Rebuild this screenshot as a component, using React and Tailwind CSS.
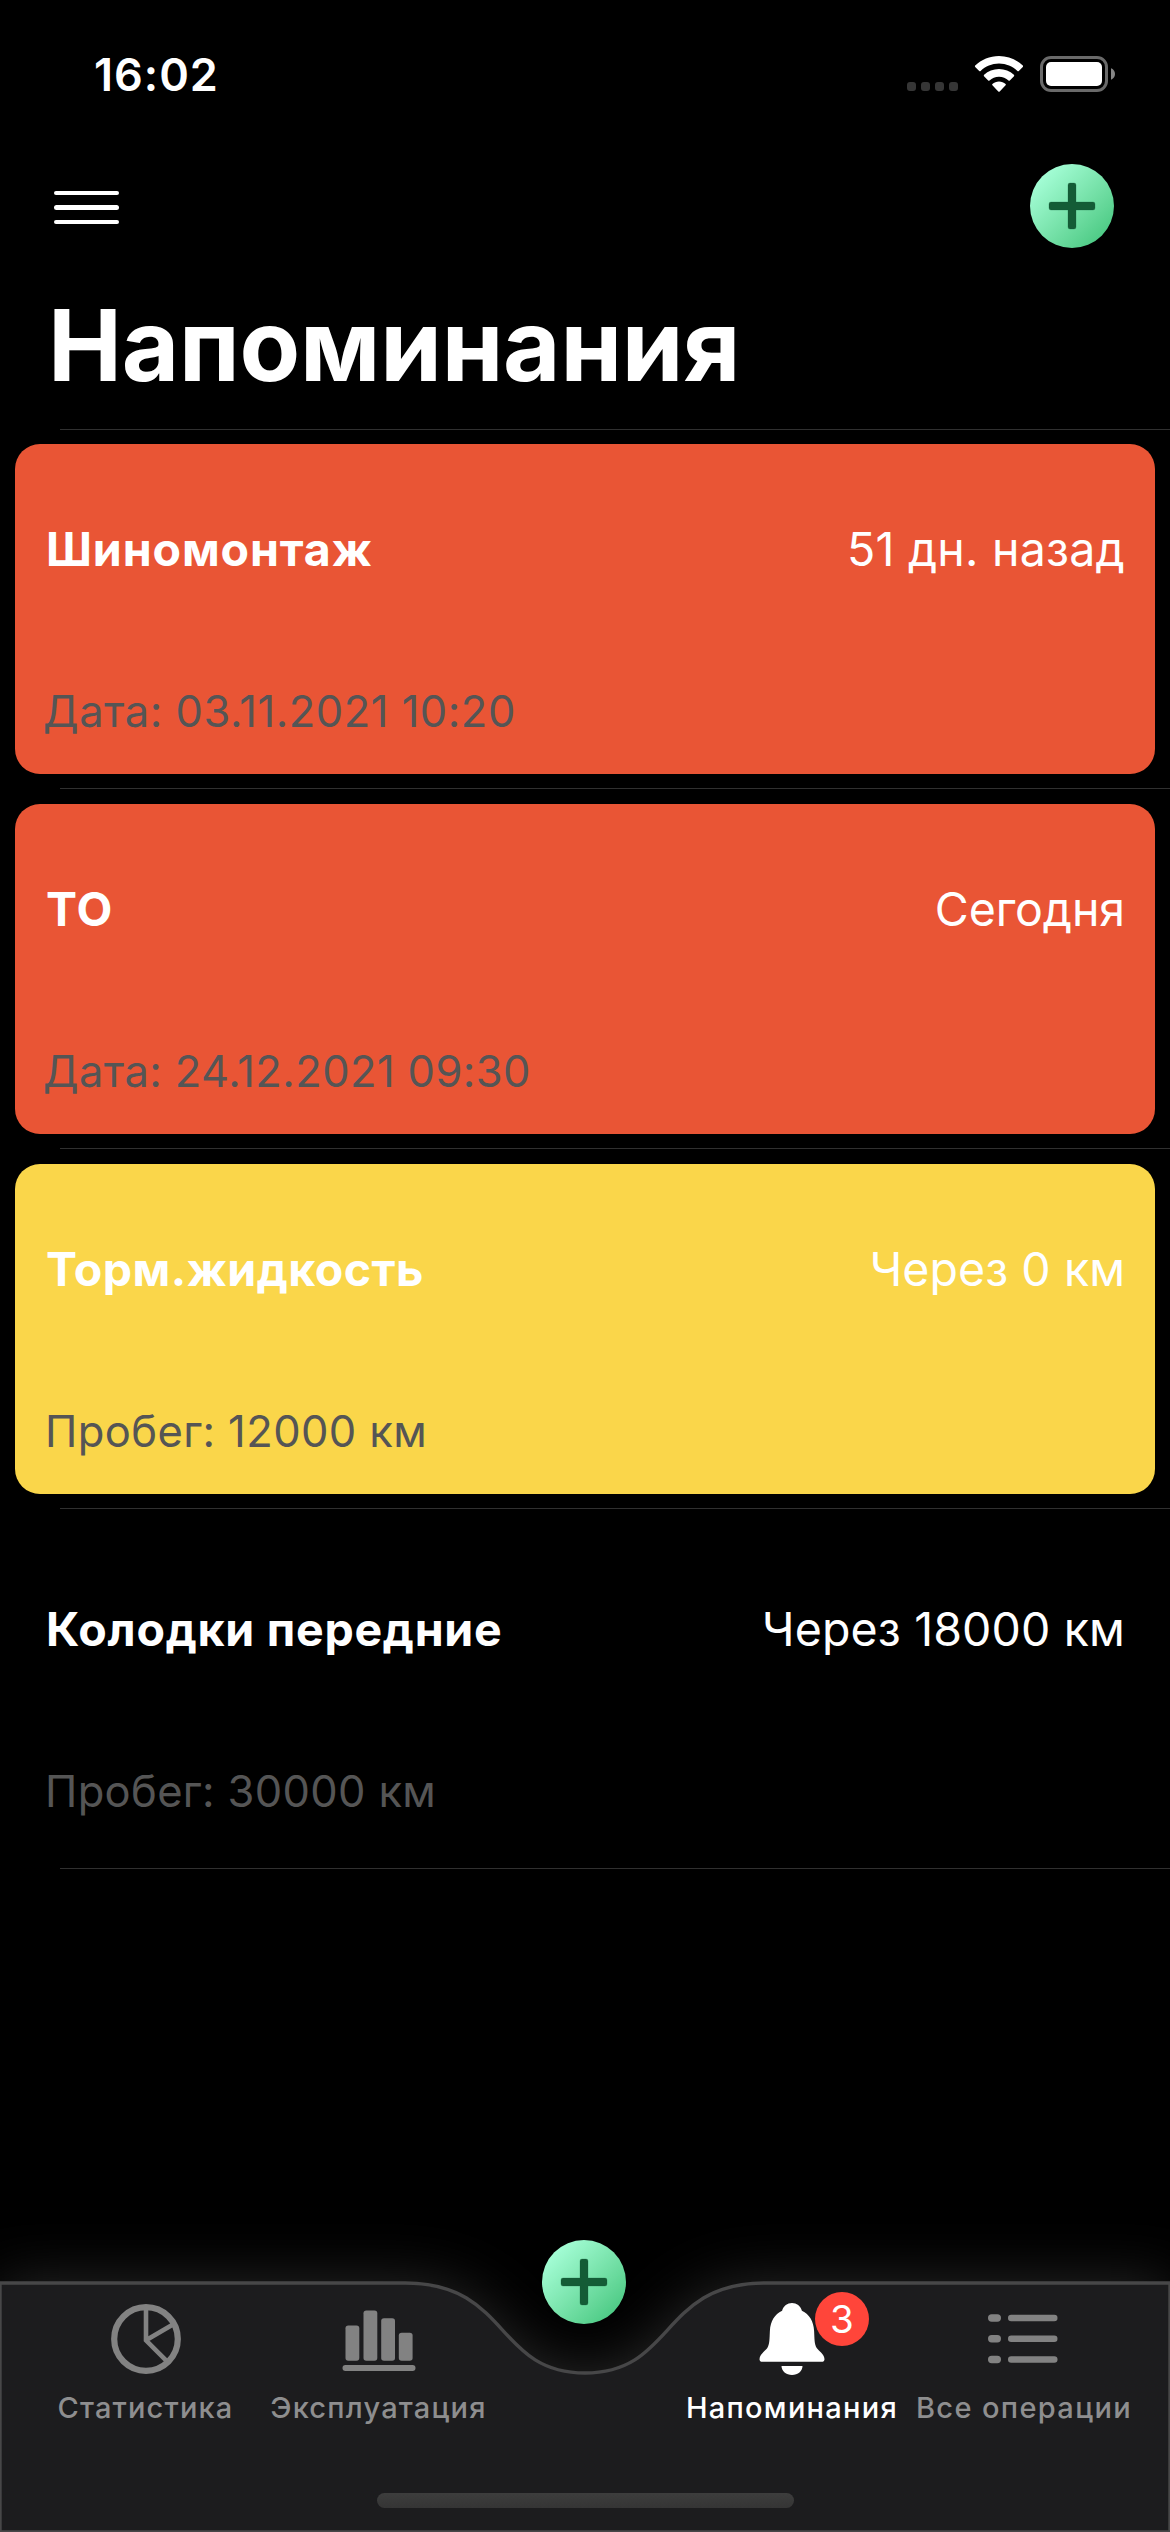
const reminders = [
  {
    title: "Шиномонтаж", due: "51 дн. назад", info: "Дата: 03.11.2021 10:20",
    card: "bg-[#e95535]", titleTrack: "tracking-[0.88px]", dueTrack: "tracking-[0.22px]", infoTrack: "-ml-[3px] tracking-[0.510px]",
  },
  {
    title: "ТО", due: "Сегодня", info: "Дата: 24.12.2021 09:30",
    card: "bg-[#e95535]", titleTrack: "tracking-[0.88px]", dueTrack: "-tracking-[0.100px]", infoTrack: "-ml-[3px] tracking-[0.390px]",
  },
  {
    title: "Торм.жидкость", due: "Через 0 км", info: "Пробег: 12000 км",
    card: "bg-[#fad64a]", titleTrack: "tracking-[0.44px]", dueTrack: "tracking-[0.050px]", infoTrack: "-ml-px tracking-[0.400px]",
  },
  {
    title: "Колодки передние", due: "Через 18000 км", info: "Пробег: 30000 км",
    card: "bg-black", titleTrack: "tracking-[0.73px]", dueTrack: "tracking-[0.130px]", infoTrack: "-ml-px tracking-[0.330px]",
  },
];

function SignalDots() {
  return (
    <div className="mt-[25px] flex gap-[5px]">
      {[0, 1, 2, 3].map((i) => (
        <span key={i} className="size-[9px] rounded-[3px] bg-[#363636]" />
      ))}
    </div>
  );
}

function WifiIcon() {
  return (
    <svg width="50" height="38" viewBox="0 0 50 38" fill="#fff">
      <path d="M25 1C34.2 1 42.6 4.6 48.8 10.5c.4.4.4 1 0 1.4l-4 4.1c-.4.4-1 .4-1.4 0C38.6 11.400 32.100 8.600 25 8.600S11.400 11.400 6.600 16c-.4.4-1 .4-1.400 0l-4-4.100c-.4-.4-.4-1 0-1.400C7.400 4.600 15.800 1 25 1z" />
      <path d="M25 14c5.700 0 10.900 2.200 14.900 5.800.4.4.5 1 .1 1.400l-4.200 4.200c-.3.4-.9.400-1.300.1-2.500-2.300-5.800-3.700-9.500-3.700s-7 1.400-9.500 3.700c-.4.300-1 .3-1.300-.1L10 21.200c-.4-.4-.3-1 .1-1.400C14.100 16.200 19.300 14 25 14z" />
      <path d="M25 26.500c2.500 0 4.800.9 6.600 2.400.4.300.4.9 0 1.300l-5.900 6.200c-.4.400-1 .4-1.400 0l-5.900-6.200c-.4-.4-.4-1 0-1.300 1.800-1.500 4.100-2.400 6.600-2.400z" />
    </svg>
  );
}

function BatteryIcon() {
  return (
    <svg width="75" height="36" viewBox="0 0 75 36">
      <rect x="1.500" y="1.500" width="65" height="33" rx="9.500" fill="none" stroke="#6a6a6a" strokeWidth="3" />
      <rect x="6" y="6" width="56" height="24" rx="5" fill="#fff" />
      <path d="M71 12.300c2.400.8 4 3 4 5.700s-1.600 4.900-4 5.700z" fill="#858585" />
    </svg>
  );
}

function AddButton() {
  return (
    <button
      type="button"
      className="flex size-[84px] items-center justify-center rounded-full bg-linear-to-br from-[#a6ffd8] from-12% to-[#4bca84] to-88%"
    >
      <svg width="54" height="54" viewBox="0 0 54 54">
        <g fill="#145c36" stroke="#145c36" strokeOpacity="0.25" strokeWidth="1">
          <path d="M25 4h4a2 2 0 0 1 2 2v17h17a2 2 0 0 1 2 2v4a2 2 0 0 1-2 2H31v17a2 2 0 0 1-2 2h-4a2 2 0 0 1-2-2V31H6a2 2 0 0 1-2-2v-4a2 2 0 0 1 2-2h17V6a2 2 0 0 1 2-2z" />
        </g>
      </svg>
    </button>
  );
}

function PieIcon() {
  return (
    <svg width="100" height="80" viewBox="0 0 100 80" fill="none" stroke="#828282">
      <circle cx="50" cy="40" r="31.800" strokeWidth="6.200" />
      <path d="M50 10v31.300l20.800 20.800M50 41.300l26.500-15.500" strokeWidth="4.600" />
    </svg>
  );
}

function BarsIcon() {
  return (
    <svg width="100" height="80" viewBox="0 0 100 80" fill="#828282">
      <rect x="16.500" y="26.500" width="13.800" height="35.300" rx="2.800" />
      <rect x="34.500" y="11.500" width="13.800" height="50.300" rx="2.800" />
      <rect x="52.200" y="19.200" width="13.800" height="42.600" rx="2.800" />
      <rect x="69.800" y="33.800" width="13.800" height="28" rx="2.800" />
      <rect x="13.500" y="66" width="73" height="6" rx="3" />
    </svg>
  );
}

function BellIcon() {
  return (
    <svg width="100" height="80" viewBox="0 0 100 80" fill="#fff">
      <path d="M50 4c4.600 0 8.600 3 9.900 7.700 7.600 3.700 11.700 10.600 12.200 20 .4 8 .2 13.500 2.600 17.300 1.900 2.900 7.800 6.200 7.800 11.200 0 1.600-1.100 2.600-3 2.600h-59c-1.900 0-3-1-3-2.600 0-5 5.900-8.300 7.800-11.200 2.400-3.800 2.200-9.300 2.600-17.300.5-9.400 4.600-16.300 12.200-20C41.400 7 45.400 4 50 4z" />
      <path d="M39.500 67h21c0 5-4.600 9-10.500 9s-10.500-4-10.500-9z" />
    </svg>
  );
}

function ListIcon() {
  return (
    <svg width="100" height="80" viewBox="0 0 100 80" fill="#828282">
      {[19, 39.700, 60.500].map((y) => (
        <g key={y}>
          <rect x="14" y={y - 3.700} width="13" height="7.400" rx="3.700" />
          <rect x="34" y={y - 3.200} width="49.500" height="6.400" rx="3.200" />
        </g>
      ))}
    </svg>
  );
}

function Tab({ icon, label, badge, className }) {
  return (
    <button type="button" className={`relative flex flex-col items-center ${className}`}>
      {icon}
      <span className="mt-[11px] text-[29px] leading-[36px] font-medium whitespace-nowrap">{label}</span>
      {badge && (
        <span className="absolute top-[-7px] left-[139px] flex size-[54px] items-center justify-center rounded-full bg-[#ff453a] text-[38.500px] leading-none tracking-normal text-white">
          {badge}
        </span>
      )}
    </button>
  );
}

function TabBarShape() {
  const outline = "M0 48H405C510 48 495 138 585 138C675 138 660 48 765 48H1170V297H0z";
  return (
    <svg className="absolute inset-x-0 bottom-0" width="1170" height="297" viewBox="0 0 1170 297" overflow="visible">
      <defs>
        <filter id="glow" filterUnits="userSpaceOnUse" x="-120" y="-120" width="1410" height="540">
          <feGaussianBlur stdDeviation="29" />
        </filter>
      </defs>
      <path d={outline} fill="#fff" fillOpacity="0.16" filter="url(#glow)" />
      <path d={outline} fill="#1c1c1e" stroke="#474748" strokeWidth="3.400" />
    </svg>
  );
}

export default function App() {
  return (
    <div className="flex h-[2532px] w-[1170px] flex-col overflow-hidden bg-black font-['Inter',sans-serif] text-white">
      <div className="flex h-[148px] shrink-0 items-center justify-between pr-[55px] pl-[94px]">
        <span className="pt-px text-[45px] leading-none font-semibold tracking-[1px]">16:02</span>
        <div className="flex items-center">
          <SignalDots />
          <div className="mr-[16px] ml-[16px]">
            <WifiIcon />
          </div>
          <BatteryIcon />
        </div>
      </div>

      <div className="flex h-[116px] shrink-0 items-center justify-between pr-[56px] pl-[54px]">
        <div className="mt-[3px] flex w-[65px] flex-col gap-[9.700px]">
          <span className="h-[4.700px] rounded-full bg-white" />
          <span className="h-[4.700px] rounded-full bg-white" />
          <span className="h-[4.700px] rounded-full bg-white" />
        </div>
        <AddButton />
      </div>

      <h1 className="mt-[22px] ml-[48px] text-[99px] leading-[118px] font-bold tracking-[-0.200px]">Напоминания</h1>

      <div className="mt-[25px]">
        <div className="-mb-px ml-[60px] h-px bg-[#303030]" />
        {reminders.map((r) => (
          <div key={r.title}>
            <div className="px-[15px] pt-[15px] pb-[14px]">
              <div className={`flex h-[330px] flex-col rounded-[25px] pt-[75px] pr-[30px] pl-[31px] ${r.card}`}>
                <div className="flex justify-between text-[46.500px] leading-[60px]">
                  <span className={`font-bold ${r.titleTrack}`}>{r.title}</span>
                  <span className={r.dueTrack}>{r.due}</span>
                </div>
                <div className={`mt-[104px] text-[43.500px] leading-[56px] text-[#555555] ${r.infoTrack}`}>{r.info}</div>
              </div>
            </div>
            <div className="ml-[60px] h-px bg-[#303030]" />
          </div>
        ))}
      </div>

      <nav className="relative mt-auto h-[249px] shrink-0">
        <TabBarShape />
        <div className="relative flex pt-[16px] pl-[29px]">
          <Tab className="w-[233px] tracking-[1.150px] text-[#8e8e8f]" icon={<PieIcon />} label="Статистика" />
          <Tab className="w-[233px] tracking-[1.200px] text-[#8e8e8f]" icon={<BarsIcon />} label="Эксплуатация" />
          <div className="w-[181px]" />
          <Tab className="w-[232px] tracking-[1.280px] text-white" icon={<BellIcon />} label="Напоминания" badge="3" />
          <Tab className="w-[232px] tracking-[1.350px] text-[#8e8e8f]" icon={<ListIcon />} label="Все операции" />
        </div>
        <div className="absolute top-[-43px] left-[542px]">
          <AddButton />
        </div>
        <div className="absolute bottom-[24px] left-[377px] h-[15px] w-[417px] rounded-full bg-linear-to-b from-[#3d3d3d] to-[#353535]" />
      </nav>
    </div>
  );
}
